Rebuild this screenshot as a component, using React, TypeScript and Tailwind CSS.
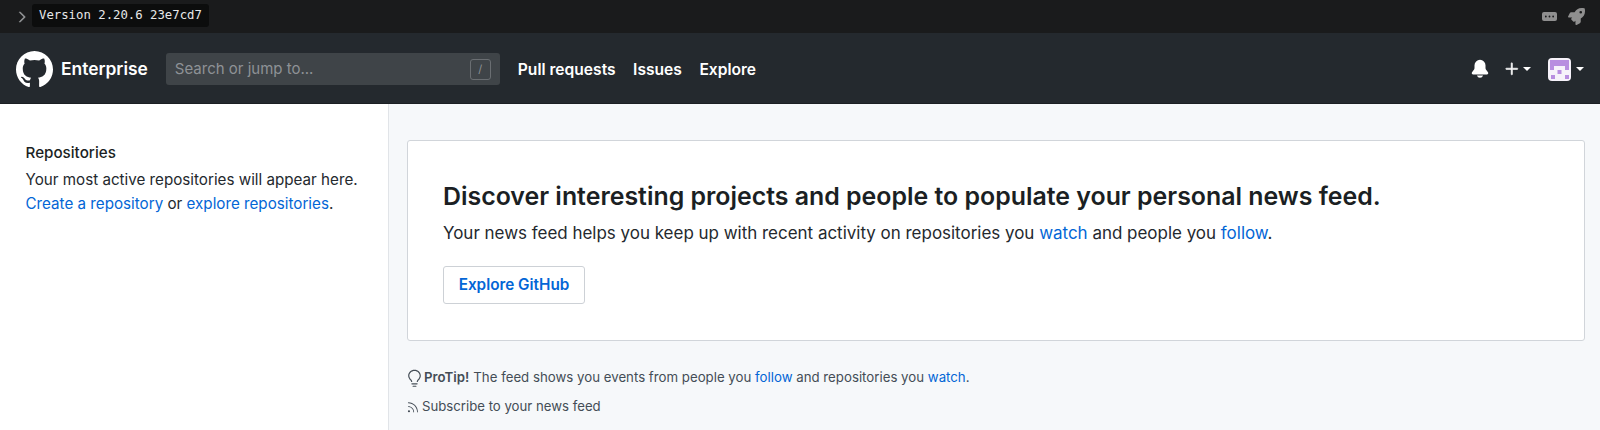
import { GoBellFill, GoPlus, GoLightBulb, GoRss, GoKebabHorizontal, GoChevronRight } from "react-icons/go";
import { FaRocket } from "react-icons/fa";

function GithubMark() {
  return (
    <svg width="37" height="37" viewBox="0 0 16 16" fill="currentColor">
      <path d="M8 0C3.58 0 0 3.58 0 8c0 3.54 2.29 6.53 5.47 7.59.4.07.55-.17.55-.38 0-.19-.01-.82-.01-1.49-2.01.37-2.53-.49-2.69-.94-.09-.23-.48-.94-.82-1.13-.28-.15-.68-.52-.01-.53.63-.01 1.08.58 1.23.82.72 1.21 1.87.87 2.33.66.07-.52.28-.87.51-1.07-1.78-.2-3.64-.89-3.64-3.95 0-.87.31-1.59.82-2.15-.08-.2-.36-1.02.08-2.12 0 0 .67-.21 2.2.82.64-.18 1.32-.27 2-.27.68 0 1.36.09 2 .27 1.53-1.04 2.2-.82 2.2-.82.44 1.1.16 1.92.08 2.12.51.56.82 1.27.82 2.15 0 3.07-1.87 3.75-3.65 3.95.29.25.54.73.54 1.48 0 1.07-.01 1.93-.01 2.2 0 .21.15.46.55.38A8.013 8.013 0 0016 8c0-4.42-3.58-8-8-8z" />
    </svg>
  );
}

function Caret() {
  return <span className="block w-0 h-0 border-x-[4.5px] border-x-transparent border-t-[4.5px] border-t-white" />;
}

function Avatar() {
  return (
    <svg width="23" height="23" viewBox="0 0 23 23" className="rounded-[4px] bg-[#f6f2fa]">
      <rect x="2" y="2" width="19" height="6" fill="#b88ee0" />
      <rect x="2" y="8" width="4" height="4" fill="#b88ee0" />
      <rect x="17" y="8" width="4" height="4" fill="#b88ee0" />
      <rect x="9.5" y="12" width="4" height="4" fill="#b88ee0" />
      <rect x="3" y="17" width="4" height="4" fill="#b88ee0" />
      <rect x="17" y="17" width="4" height="4" fill="#b88ee0" />
    </svg>
  );
}

export default function App() {
  return (
    <div className="w-[1600px] h-[430px] overflow-hidden flex flex-col bg-white font-['Inter',sans-serif]">
      {/* Tool bar */}
      <div className="h-[33px] bg-[#1a1b1c] flex items-center pl-[13px] pr-[15px]">
        <GoChevronRight className="text-[#9a9c9e] w-[18px] h-[18px] stroke-[#9a9c9e] stroke-[0.6]" />
        <div className="ml-[1px] mb-[2px] h-[23px] px-[7px] rounded-[3px] bg-[#0c0d0d] text-[#e8e8e8] text-[12.3px] flex items-center font-['DejaVu_Sans_Mono',monospace]">
          Version 2.20.6 23e7cd7
        </div>
        <div className="ml-auto flex items-center gap-[11px] text-[#8f8f8f]">
          <div className="w-[15px] h-[9px] rounded-[2px] bg-[#8f8f8f] flex items-center justify-center text-[#1a1b1c]">
            <GoKebabHorizontal className="w-[11px] h-[11px]" />
          </div>
          <FaRocket className="w-[17px] h-[17px]" />
        </div>
      </div>

      {/* Main nav */}
      <header className="h-[71px] pt-[2px] bg-[#24292e] flex items-center pl-[16px] pr-[16px] text-white border-b border-[#1b1f23]">
        <GithubMark />
        <span className="ml-[8px] pt-[1px] text-[17.4px] font-semibold">Enterprise</span>
        <div className="ml-[18px] w-[334px] h-[32px] rounded-[3px] bg-[#3f4448] flex items-center pl-[9px] pr-[9px] text-[15px] text-[#8e9296]">
          Search or jump to...
          <span className="ml-auto w-[21px] h-[21px] border border-[#6a6e72] rounded-[3px] flex items-center justify-center text-[11px]">/</span>
        </div>
        <nav className="ml-[18px] pt-[2px] flex items-center gap-[17.5px] text-[15.6px] font-semibold">
          <span>Pull requests</span>
          <span>Issues</span>
          <span>Explore</span>
        </nav>
        <div className="ml-auto flex items-center">
          <GoBellFill className="w-[22px] h-[22px]" />
          <GoPlus className="ml-[11px] w-[20px] h-[20px] stroke-white stroke-[0.7]" />
          <span className="ml-[1px]"><Caret /></span>
          <span className="ml-[17px]"><Avatar /></span>
          <span className="ml-[5px]"><Caret /></span>
        </div>
      </header>

      {/* Body */}
      <div className="flex-1 flex">
        <aside className="w-[389px] border-r border-[#e1e4e8] pl-[25.5px] pt-[37px] text-[15.2px] leading-[24px] text-[#24292e]">
          <h2 className="font-medium text-[#1b1f23]">Repositories</h2>
          <p className="mt-[3px]">Your most active repositories will appear here.</p>
          <p>
            <a className="text-[#0366d6]">Create a repository</a> or <a className="text-[#0366d6]">explore repositories</a>.
          </p>
        </aside>
        <main className="flex-1 bg-[#f6f8fa] pl-[18px] pr-[15px] pt-[36px]">
          <section className="h-[201px] bg-white border border-[#d1d5da] rounded-[3px] pl-[35px] pt-[40px]">
            <h1 className="text-[24.9px] leading-[30px] font-semibold text-[#1b1f23]">
              Discover interesting projects and people to populate your personal news feed.
            </h1>
            <p className="mt-[10px] text-[16.97px] leading-[24px] text-[#24292e]">
              Your news feed helps you keep up with recent activity on repositories you <a className="text-[#0366d6]">watch</a> and people you <a className="text-[#0366d6]">follow</a>.
            </p>
            <button className="mt-[21px] w-[142px] h-[38px] border border-[#cdd1d6] rounded-[3px] bg-white text-[15.3px] font-semibold text-[#0366d6]">
              Explore GitHub
            </button>
          </section>
          <div className="mt-[25px] -ml-px flex items-center text-[13.25px] text-[#444d56] h-[24px]">
            <GoLightBulb className="w-[19px] h-[19px] -ml-px" />
            <b className="font-semibold">ProTip!</b>
            <span className="ml-[4px]">
              The feed shows you events from people you <a className="text-[#0366d6]">follow</a> and repositories you <a className="text-[#0366d6]">watch</a>.
            </span>
          </div>
          <div className="mt-[5px] -ml-px flex items-center text-[13.2px] text-[#444d56] h-[24px]">
            <GoRss className="w-[13px] h-[13px] mr-[3px]" />
            Subscribe to your news feed
          </div>
        </main>
      </div>
    </div>
  );
}
